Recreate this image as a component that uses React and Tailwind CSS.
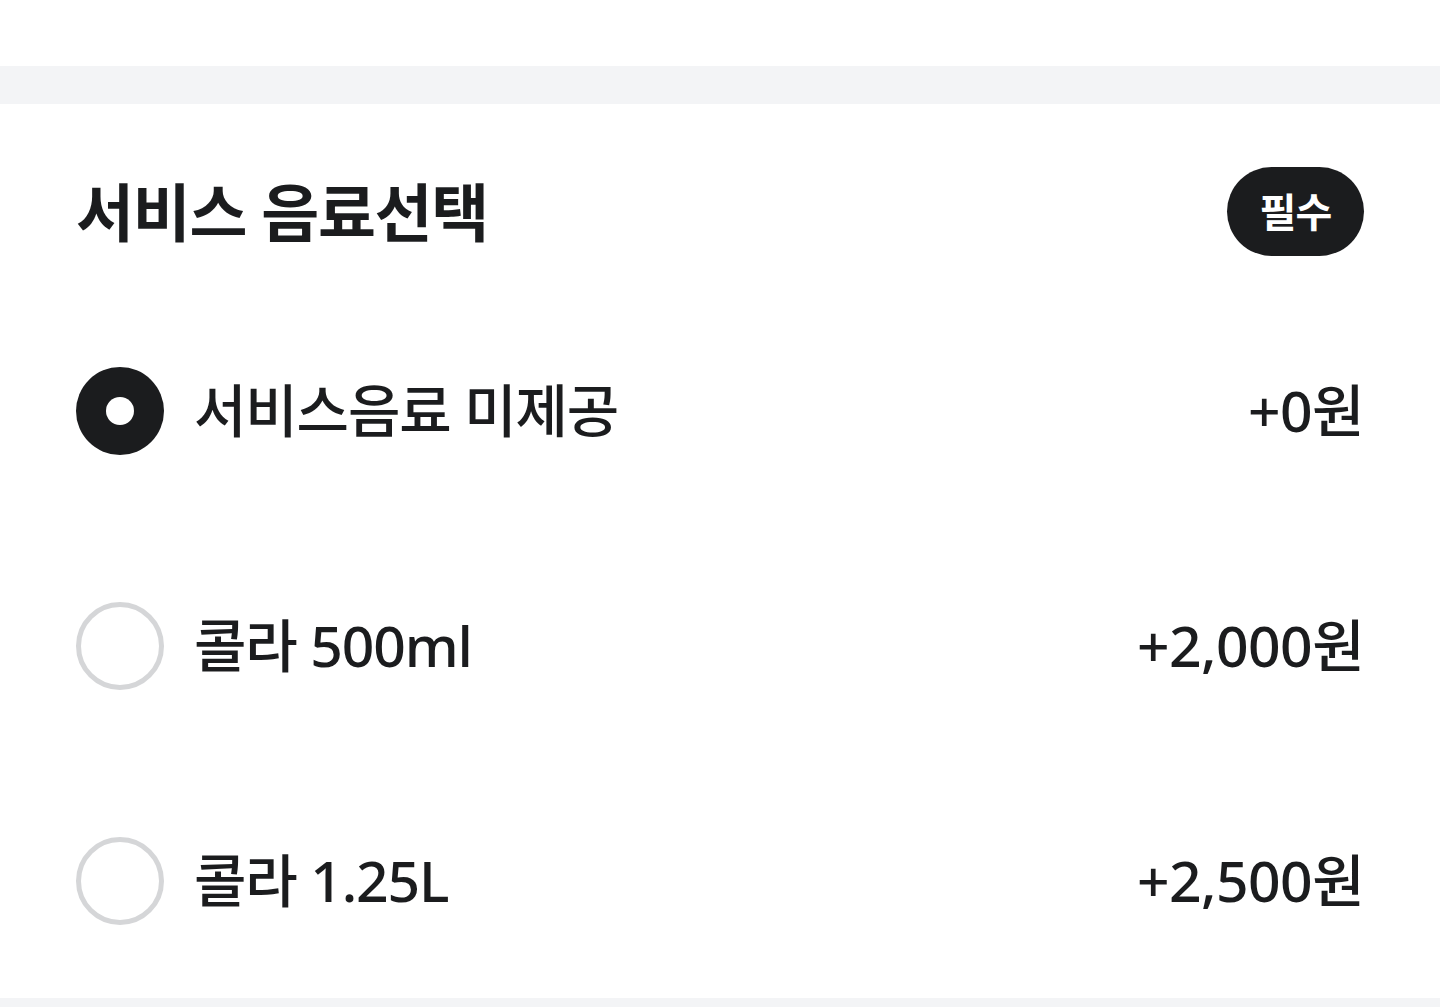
import React from "react";

const font = { fontFamily: '"Noto Sans", "Noto Sans CJK KR", sans-serif' };

const options = [
  { label: "서비스음료 미제공", price: "+0원", selected: true },
  { label: "콜라 500ml", price: "+2,000원", selected: false },
  { label: "콜라 1.25L", price: "+2,500원", selected: false },
];

function Radio({ selected }) {
  if (selected) {
    return (
      <div className="flex h-[88px] w-[88px] shrink-0 items-center justify-center rounded-full bg-[#1b1c1e]">
        <div className="h-[28px] w-[28px] rounded-full bg-white" />
      </div>
    );
  }
  return <div className="h-[88px] w-[88px] shrink-0 rounded-full border-[5px] border-[#d5d6d8] bg-white" />;
}

export default function App() {
  return (
    <div className="min-h-[1007px] w-[1440px] bg-[#f3f4f6] text-[#1b1c1e]" style={font}>
      <div className="h-[66px] bg-white" />
      <div className="h-[38px] bg-[#f3f4f6]" />
      <section className="bg-white px-[76px] pt-[63px]">
        <div className="flex h-[89px] items-center justify-between">
          <h2 className="text-[63px] font-bold leading-none tracking-[-0.02em]">서비스 음료선택</h2>
          <span className="flex h-[89px] w-[137px] items-center justify-center rounded-full bg-[#1b1c1e] text-[40px] font-bold leading-none tracking-[-0.02em] text-white">
            필수
          </span>
        </div>
        <div className="mt-[37px] flex flex-col">
          {options.map((o) => (
            <div key={o.label} className="flex h-[235px] items-center justify-between">
              <div className="flex items-center gap-[30px]">
                <Radio selected={o.selected} />
                <span className="text-[57px] font-medium leading-none tracking-[-0.02em]">{o.label}</span>
              </div>
              <span className="text-[57px] font-medium leading-none tracking-[-0.01em]">{o.price}</span>
            </div>
          ))}
        </div>
      </section>
    </div>
  );
}
